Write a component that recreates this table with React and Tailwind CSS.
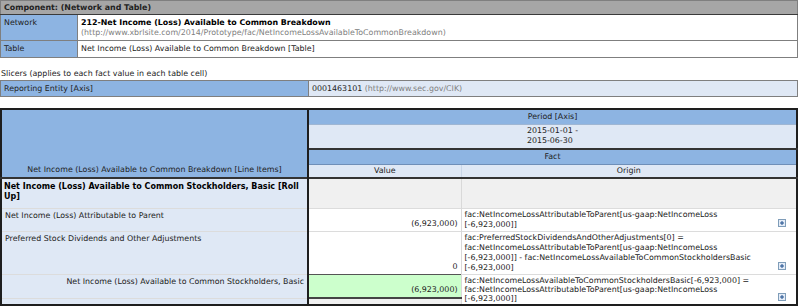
import React from 'react';

const PlusBox = () => (
  <svg width="8" height="8" viewBox="0 0 8 8" className="inline-block">
    <rect x="0.5" y="0.5" width="7" height="7" fill="#e4ecf7" stroke="#7f9db9" />
    <path d="M2 4h4M4 2v4" stroke="#1f4e8c" strokeWidth="1" />
  </svg>
);

const OriginCell = ({ lines, rowSpan, className = '' }) => (
  <td rowSpan={rowSpan} className={`border-l border-[#d9d9d9] align-bottom px-[3px] py-[1px] ${className}`}>
    <div className="flex items-end justify-between">
      <div>
        {lines.map((l, i) => (
          <div key={i}>{l}</div>
        ))}
      </div>
      <div className="pr-[7px] pb-[1px]">
        <PlusBox />
      </div>
    </div>
  </td>
);

export default function App() {
  return (
    <div className="w-[800px] h-[307px] bg-white text-[#222] text-[7.9px] leading-[10px] font-['DejaVu_Sans',Verdana,sans-serif] overflow-hidden">
      {/* Component table */}
      <table className="w-[798px] border-collapse border border-[#7f7f7f]">
        <tbody>
          <tr className="h-[14px]">
            <td colSpan={2} className="bg-[#a6a6a6] font-bold px-[3px] border-b border-[#3a3a3a]">
              Component: (Network and Table)
            </td>
          </tr>
          <tr className="h-[26px]">
            <td className="w-[77px] bg-[#8db4e2] px-[3px] align-top pt-[3px] border-r border-[#7f7f7f]">Network</td>
            <td className="px-[3px] align-top pt-[3px]">
              <div className="font-bold text-black">212-Net Income (Loss) Available to Common Breakdown</div>
              <div className="text-[#808080]">(http://www.xbrlsite.com/2014/Prototype/fac/NetIncomeLossAvailableToCommonBreakdown)</div>
            </td>
          </tr>
          <tr className="h-[17px] border-t border-[#7f7f7f]">
            <td className="bg-[#8db4e2] px-[3px] border-r border-[#7f7f7f]">Table</td>
            <td className="px-[3px]">Net Income (Loss) Available to Common Breakdown [Table]</td>
          </tr>
        </tbody>
      </table>

      <div className="mt-[11px] h-[11px] px-[1px]">Slicers (applies to each fact value in each table cell)</div>

      <table className="w-[798px] border-collapse border border-[#7f7f7f]">
        <tbody>
          <tr className="h-[16px]">
            <td className="w-[308px] bg-[#8db4e2] px-[3px] border-r border-[#7f7f7f]">Reporting Entity [Axis]</td>
            <td className="bg-[#dfe8f5] px-[3px]">
              0001463101 <span className="text-[#808080]">(http://www.sec.gov/CIK)</span>
            </td>
          </tr>
        </tbody>
      </table>

      {/* Main table */}
      <table className="mt-[11px] w-[798px] border-collapse border-2 border-[#1e1e1e]">
        <tbody>
          <tr className="h-[15px]">
            <td rowSpan={4} className="w-[307px] bg-[#8db4e2] border-r-2 border-[#1e1e1e] align-bottom text-center pb-[2px]">
              Net Income (Loss) Available to Common Breakdown [Line Items]
            </td>
            <td colSpan={2} className="bg-[#8db4e2] text-center border-b border-[#9fb6d3]">Period [Axis]</td>
          </tr>
          <tr className="h-[25px]">
            <td colSpan={2} className="bg-[#dfe8f5] text-center border-b-2 border-[#333]">
              <span className="inline-block text-left">2015-01-01 -<br />2015-06-30</span>
            </td>
          </tr>
          <tr className="h-[15px]">
            <td colSpan={2} className="bg-[#8db4e2] text-center border-b border-[#6f8fb8]">Fact</td>
          </tr>
          <tr className="h-[14px] border-b-2 border-[#333]">
            <td className="w-[153px] bg-[#dfe8f5] text-center">Value</td>
            <td className="bg-[#dfe8f5] text-center border-l border-[#c9d6e8]">Origin</td>
          </tr>

          <tr className="h-[30px] border-b border-[#dcdcdc]">
            <td className="bg-[#dfe8f5] border-r-2 border-[#1e1e1e] font-bold text-black px-[2px] align-top pt-[3px] text-[8px] leading-[10px]">
              Net Income (Loss) Available to Common Stockholders, Basic [Roll Up]
            </td>
            <td className="bg-[#f0f0f0]"></td>
            <td className="bg-[#f0f0f0] border-l border-[#d9d9d9]"></td>
          </tr>

          <tr className="h-[22px] border-b border-[#dcdcdc]">
            <td className="bg-[#dfe8f5] border-r-2 border-[#1e1e1e] px-[3px] align-top pt-[2px]">
              Net Income (Loss) Attributable to Parent
            </td>
            <td className="bg-white text-right align-bottom px-[3px] pb-[2px]">(6,923,000)</td>
            <OriginCell
              className="bg-white"
              lines={['fac:NetIncomeLossAttributableToParent[us-gaap:NetIncomeLoss', '[-6,923,000]]']}
            />
          </tr>

          <tr className="h-[42px] border-b border-[#dcdcdc]">
            <td className="bg-[#dfe8f5] border-r-2 border-[#1e1e1e] px-[3px] align-top pt-[2px]">
              Preferred Stock Dividends and Other Adjustments
            </td>
            <td className="bg-white text-right align-bottom px-[3px] pb-[2px]">0</td>
            <OriginCell
              className="bg-white"
              lines={[
                'fac:PreferredStockDividendsAndOtherAdjustments[0] =',
                'fac:NetIncomeLossAttributableToParent[us-gaap:NetIncomeLoss',
                '[-6,923,000]] - fac:NetIncomeLossAvailableToCommonStockholdersBasic',
                '[-6,923,000]',
              ]}
            />
          </tr>

          <tr className="h-[23px]">
            <td className="bg-[#dfe8f5] border-r-2 border-[#1e1e1e] border-b border-b-[#dcdcdc] px-[3px] align-top pt-[2px] text-right">
              Net Income (Loss) Available to Common Stockholders, Basic
            </td>
            <td className="bg-[#ccffcc] text-right align-bottom px-[3px] pb-[2px] border-t border-[#555] border-b-2 border-b-[#444]">
              (6,923,000)
            </td>
            <OriginCell
              rowSpan={2}
              className="bg-white leading-[9px]"
              lines={[
                'fac:NetIncomeLossAvailableToCommonStockholdersBasic[-6,923,000] =',
                'fac:NetIncomeLossAttributableToParent[us-gaap:NetIncomeLoss',
                '[-6,923,000]]',
              ]}
            />
          </tr>
          <tr className="h-[6px]">
            <td className="bg-[#dfe8f5] border-r-2 border-[#1e1e1e]"></td>
            <td className="bg-[#f0f0f0]"></td>
          </tr>
        </tbody>
      </table>
    </div>
  );
}
